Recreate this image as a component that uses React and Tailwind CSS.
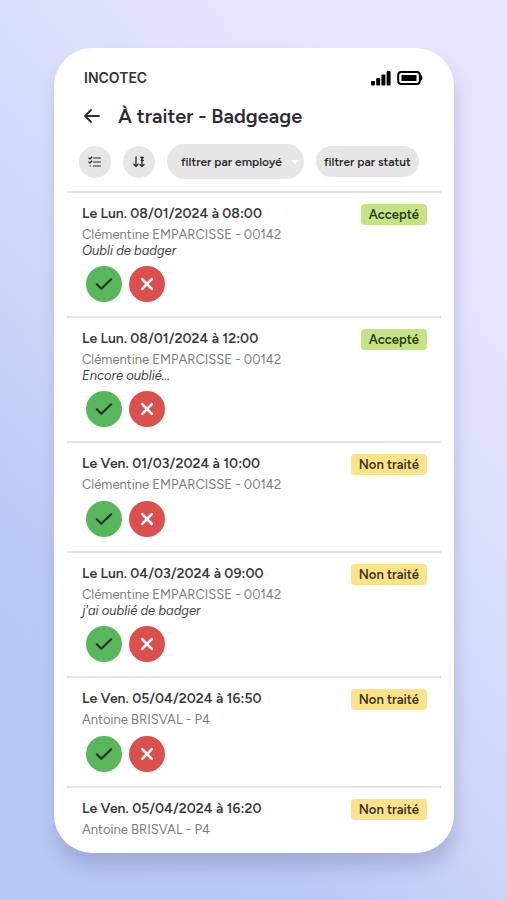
import { useState } from 'react';

const INITIAL_ENTRIES = [
    { id: 1, date: 'Le Lun. 08/01/2024 à 08:00', employee: 'Clémentine EMPARCISSE - 00142', comment: 'Oubli de badger', status: 'accepted' },
    { id: 2, date: 'Le Lun. 08/01/2024 à 12:00', employee: 'Clémentine EMPARCISSE - 00142', comment: 'Encore oublié...', status: 'accepted' },
    { id: 3, date: 'Le Ven. 01/03/2024 à 10:00', employee: 'Clémentine EMPARCISSE - 00142', status: 'pending' },
    { id: 4, date: 'Le Lun. 04/03/2024 à 09:00', employee: 'Clémentine EMPARCISSE - 00142', comment: "j'ai oublié de badger", status: 'pending' },
    { id: 5, date: 'Le Ven. 05/04/2024 à 16:50', employee: 'Antoine BRISVAL - P4', status: 'pending' },
    { id: 6, date: 'Le Ven. 05/04/2024 à 16:20', employee: 'Antoine BRISVAL - P4', status: 'pending', collapsed: true },
];

const STATUS = {
    accepted: { label: 'Accepté', className: 'bg-[#c5e384] text-[#2c3a1c]' },
    rejected: { label: 'Refusé', className: 'bg-[#f3b0ad] text-[#45201e]' },
    pending: { label: 'Non traité', className: 'bg-[#fce38a] text-[#3b3423]' },
};

function StatusIcons() {
    return (
        <div className="flex items-center gap-1.5 text-black">
            <svg width="20" height="16" viewBox="0 0 20 16" fill="currentColor" aria-hidden="true">
                <rect x="0" y="11" width="4" height="4.5" rx="1" />
                <rect x="5.2" y="8" width="4" height="7.5" rx="1" />
                <rect x="10.4" y="4.5" width="4" height="11" rx="1" />
                <rect x="15.6" y="1" width="4" height="14.5" rx="1" />
            </svg>
            <svg width="26" height="16" viewBox="0 0 26 16" fill="none" aria-hidden="true">
                <rect x="1.2" y="1.9" width="21.6" height="12" rx="3" stroke="currentColor" strokeWidth="2" />
                <rect x="4.5" y="5" width="15" height="6" fill="currentColor" />
                <path d="M23 4.5c1.6.6 2.4 1.8 2.4 3.4s-.8 2.8-2.4 3.4z" fill="currentColor" />
            </svg>
        </div>
    );
}

function Entry({ entry, onChange }) {
    const status = STATUS[entry.status];

    return (
        <li className="border-t-2 border-[#e4e4e5] pt-[9px] pb-3.5 pl-[15px] pr-3.5">
            <div className="flex items-center justify-between pb-px">
                <h2 className="text-sm leading-6 font-semibold text-[#3a3a3c]">{entry.date}</h2>
                <span className={`rounded px-2 text-[13px] leading-[21px] font-semibold ${status.className}`}>{status.label}</span>
            </div>
            <p className="text-[13px] leading-4 text-[#7c7c7e]">{entry.employee}</p>
            {entry.comment && <p className="text-[13px] leading-[15px] italic text-[#434345]">{entry.comment}</p>}
            {!entry.collapsed && (
                <div className="flex gap-[7px] pt-2 pl-1">
                    <button
                        type="button"
                        aria-label="Accepter"
                        onClick={() => onChange(entry.id, 'accepted')}
                        className="flex size-9 items-center justify-center rounded-full bg-[#58b65b] text-[#2b2d2b]"
                    >
                        <svg width="18" height="14" viewBox="0 0 18 14" fill="none" stroke="currentColor" strokeWidth="2.2" strokeLinecap="round" strokeLinejoin="round">
                            <path d="M1.8 7.3 6.3 11.8 16.2 2.3" />
                        </svg>
                    </button>
                    <button
                        type="button"
                        aria-label="Refuser"
                        onClick={() => onChange(entry.id, 'rejected')}
                        className="flex size-9 items-center justify-center rounded-full bg-[#db504d] text-white"
                    >
                        <svg width="14" height="14" viewBox="0 0 14 14" fill="none" stroke="currentColor" strokeWidth="2.6" strokeLinecap="round">
                            <path d="M2.2 2.2l9.6 9.6M11.8 2.2L2.2 11.8" />
                        </svg>
                    </button>
                </div>
            )}
        </li>
    );
}

export default function App() {
    const [entries, setEntries] = useState(INITIAL_ENTRIES);

    const updateStatus = (id, status) => {
        setEntries(entries.map(e => (e.id === id ? { ...e, status } : e)));
    };

    return (
        <div className="min-h-screen bg-[linear-gradient(50deg,#b6c7f3_0%,#b9c9f5_25%,#cdd5f9_42%,#d8dffc_60%,#e5e3fe_76%,#e8e5fe_100%)] pt-12 pb-[47px] pl-[54px] pr-[53px] font-['Figtree',Inter,sans-serif]">
            <main className="w-full overflow-hidden rounded-[38px] bg-white px-[13px] pb-px shadow-[2px_14px_16px_rgba(90,90,140,0.25)]">
                <div className="flex items-center justify-between pt-5 pl-[17px] pr-[18px]">
                    <span className="font-[Inter,sans-serif] text-sm leading-5 font-semibold text-[#343436]">INCOTEC</span>
                    <StatusIcons />
                </div>

                <header className="flex items-center gap-4 pt-3.5 pl-[15px]">
                    <button type="button" aria-label="Retour" className="text-[#2d2d2f]">
                        <svg width="20" height="20" viewBox="0 0 20 20" fill="none" stroke="currentColor" strokeWidth="1.8" strokeLinecap="round" strokeLinejoin="round">
                            <path d="M17 10H3M9 4l-6 6 6 6" />
                        </svg>
                    </button>
                    <h1 className="text-xl leading-7 font-semibold text-[#2d2d2f]">À traiter - Badgeage</h1>
                </header>

                <div className="flex items-center gap-3 pt-3.5 pb-3 pl-3 text-xs font-semibold text-[#2d2d2f]">
                    <button type="button" aria-label="Sélection multiple" className="flex size-8 shrink-0 items-center justify-center rounded-full bg-[#e6e6e6]">
                        <svg width="14" height="14" viewBox="0 0 14 14" fill="none" stroke="currentColor" strokeWidth="1.2" strokeLinecap="round" strokeLinejoin="round">
                            <path d="M5.5 3h7M5.5 7h7M5.5 11h7M1 3l1 1 1.8-2M1 7l1 1 1.8-2M2 11h.6" />
                        </svg>
                    </button>
                    <button type="button" aria-label="Trier" className="flex size-8 shrink-0 items-center justify-center rounded-full bg-[#e6e6e6]">
                        <svg width="14" height="14" viewBox="0 0 14 14" fill="none" stroke="currentColor" strokeWidth="1.3" strokeLinecap="round" strokeLinejoin="round">
                            <path d="M4 2v9.5M1.8 9.3 4 11.5l2.2-2.2" />
                            <path d="M10 2v9.5M8 9.5l2 2 2-2M8.8 2.5h2.4L9.2 5.5h2.2" />
                        </svg>
                    </button>
                    <button type="button" className="flex h-[35px] items-center gap-2 rounded-full bg-[#e6e6e6] pl-3.5 pr-1 whitespace-nowrap">
                        filtrer par employé
                        <svg width="10" height="6" viewBox="0 0 10 6" fill="white" aria-hidden="true">
                            <path d="M1 1h8L5 5z" />
                        </svg>
                    </button>
                    <button type="button" className="h-[31px] rounded-full bg-[#e6e6e6] px-2 whitespace-nowrap">filtrer par statut</button>
                </div>

                <ul>
                    {entries.map(entry => (
                        <Entry key={entry.id} entry={entry} onChange={updateStatus} />
                    ))}
                </ul>
            </main>
        </div>
    );
}
